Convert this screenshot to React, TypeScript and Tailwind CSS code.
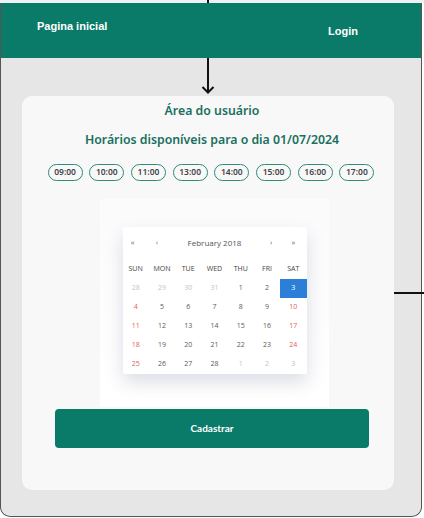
const horarios = ['09:00', '10:00', '11:00', '13:00', '14:00', '15:00', '16:00', '17:00'];
const weekdays = ['SUN', 'MON', 'TUE', 'WED', 'THU', 'FRI', 'SAT'];

type Day = { n: number; muted?: boolean; selected?: boolean };

const weeks: Day[][] = [
  [{ n: 28, muted: true }, { n: 29, muted: true }, { n: 30, muted: true }, { n: 31, muted: true }, { n: 1 }, { n: 2 }, { n: 3, selected: true }],
  [4, 5, 6, 7, 8, 9, 10].map((n) => ({ n })),
  [11, 12, 13, 14, 15, 16, 17].map((n) => ({ n })),
  [18, 19, 20, 21, 22, 23, 24].map((n) => ({ n })),
  [{ n: 25 }, { n: 26 }, { n: 27 }, { n: 28 }, { n: 1, muted: true }, { n: 2, muted: true }, { n: 3, muted: true }],
];

function dayClass(d: Day, col: number) {
  if (d.selected) return 'bg-[#2b7fd8] text-white';
  if (d.muted) return 'text-[#c4c4c4]';
  if (col === 0 || col === 6) return 'text-[#e0605a]';
  return 'text-[#5a5a5a]';
}

function Calendar() {
  return (
    <div className="w-[184px] bg-white shadow-[0_8px_18px_rgba(60,70,110,0.18)] rounded-[2px] font-['Open_Sans',sans-serif]">
      <div className="grid grid-cols-7 h-[32px] items-center text-[7.5px] text-[#666]">
        <span className="text-center pr-[6px]">«</span>
        <span className="text-center pr-[10px]">‹</span>
        <span className="col-span-3 text-center text-[8px] text-[#555]">February 2018</span>
        <span className="text-center pl-[8px]">›</span>
        <span className="text-center">»</span>
      </div>
      <div className="grid grid-cols-7 h-[20px] items-center text-[7px] text-[#444]">
        {weekdays.map((w) => (
          <span key={w} className="text-center">{w}</span>
        ))}
      </div>
      {weeks.map((week, i) => (
        <div key={i} className="grid grid-cols-7 h-[19px]">
          {week.map((d, j) => (
            <span key={j} className={`flex items-center justify-center text-[7px] ${dayClass(d, j)}`}>
              {d.n}
            </span>
          ))}
        </div>
      ))}
    </div>
  );
}

export default function App() {
  return (
    <div className="relative w-[424px] h-[518px] bg-white overflow-hidden">
      <div className="h-[3px] bg-[#eef3f2]" />
      <div className="w-[422px] h-[514px] bg-[#e6e6e6] border-l border-r border-b border-[#555] rounded-b-[10px] overflow-hidden">
        <header className="h-[55px] bg-[#0a7a69] flex justify-between pl-[36px] pr-[63px] font-['Liberation_Sans',sans-serif] font-bold text-[11px] text-white">
          <span className="pt-[15px]">Pagina inicial</span>
          <span className="pt-[20px]">Login</span>
        </header>

        <section className="mt-[38px] ml-[21px] w-[372px] h-[394px] bg-[#f8f8f8] rounded-[10px] pl-[8px] pt-[6px] flex flex-col items-center font-['Noto_Sans',sans-serif]">
          <h1 className="text-[12.3px] leading-[18px] font-semibold text-[#1a6f61]">Área do usuário</h1>
          <h2 className="mt-[10px] text-[12.3px] leading-[20px] font-semibold text-[#1a6f61]">
            Horários disponíveis para o dia 01/07/2024
          </h2>
          <div className="mt-[14px] flex gap-[6.7px] mr-[2px]">
            {horarios.map((h) => (
              <span
                key={h}
                className="w-[35px] h-[17px] flex items-center justify-center rounded-full border border-[#2e8a79] text-[8.5px] font-semibold text-[#444]"
              >
                {h}
              </span>
            ))}
          </div>
          <div className="mt-[18px] ml-[4px] w-[229px] h-[208px] bg-gradient-to-b from-[#fbfbfc] to-white pt-[28px] pl-[23px]">
            <Calendar />
          </div>
          <button className="mt-[2px] w-[314px] h-[39px] rounded-[4px] bg-[#0a7a69] text-white text-[10px] font-bold font-['Lato',sans-serif]">
            Cadastrar
          </button>
        </section>
      </div>

      <svg className="absolute inset-0 pointer-events-none" width="424" height="518">
        <line x1="208" y1="0" x2="208" y2="3" stroke="#111" strokeWidth="2" />
        <line x1="208" y1="58" x2="208" y2="93" stroke="#111" strokeWidth="2" />
        <polyline points="202.5,87 208,92.5 213.5,87" fill="none" stroke="#111" strokeWidth="2" />
        <line x1="394" y1="293" x2="424" y2="293" stroke="#111" strokeWidth="2" />
      </svg>
    </div>
  );
}
